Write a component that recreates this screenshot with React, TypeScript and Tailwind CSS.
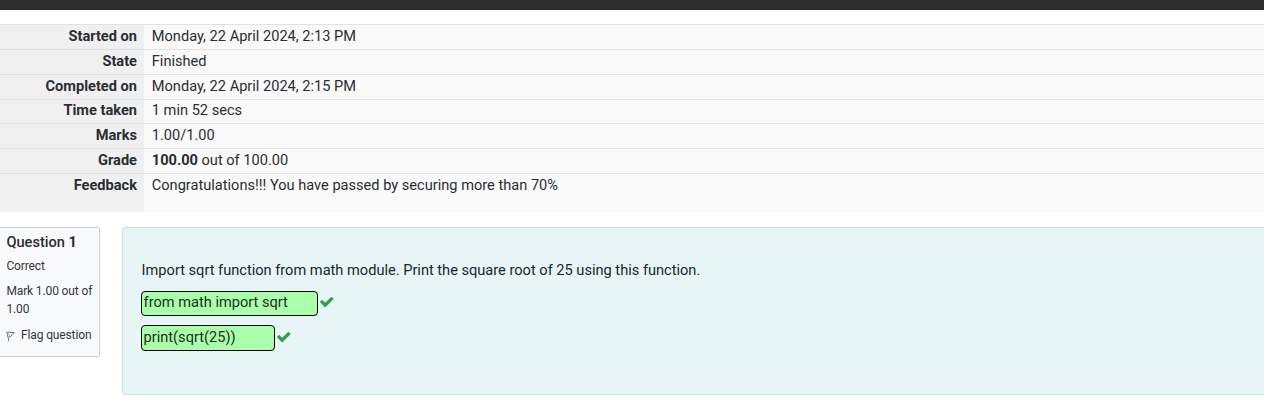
type Row = { label: string; strong?: string; value: string; height: string };

const rows: Row[] = [
  { label: "Started on", value: "Monday, 22 April 2024, 2:13 PM", height: "h-[25px] leading-[22px]" },
  { label: "State", value: "Finished", height: "h-[25px] leading-[22px]" },
  { label: "Completed on", value: "Monday, 22 April 2024, 2:15 PM", height: "h-[25px] leading-[22px]" },
  { label: "Time taken", value: "1 min 52 secs", height: "h-[24px] leading-[20px]" },
  { label: "Marks", value: "1.00/1.00", height: "h-[25px] leading-[22px]" },
  { label: "Grade", strong: "100.00", value: " out of 100.00", height: "h-[25px] leading-[22px]" },
  { label: "Feedback", value: "Congratulations!!! You have passed by securing more than 70%", height: "h-[39px] leading-[22px]" },
];

function FlagIcon() {
  return (
    <svg width="9" height="11" viewBox="0 0 9 11" fill="none" stroke="#777777" strokeWidth="1" className="relative top-px">
      <path d="M0.8 1.2 L3 10.4" />
      <path d="M0.8 1.2 L8.4 1.6 L5.8 3.6 L5.4 5 L2.2 6.2" />
      <path d="M2.6 2.6 L3.6 5.2" stroke="#b5b5b5" />
    </svg>
  );
}

function CheckIcon() {
  return (
    <svg viewBox="0 0 1792 1792" className="mb-[3px] ml-[0.5px] size-[15.5px] fill-[#319e4f]">
      <path d="M1671 566q0 40-28 68l-724 724-136 136q-28 28-68 28t-68-28l-136-136-362-362q-28-28-28-68t28-68l136-136q28-28 68-28t68 28l294 295 656-657q28-28 68-28t68 28l136 136q28 28 28 68z" />
    </svg>
  );
}

function Summary() {
  return (
    <div className="mt-[14px]">
      {rows.map((row) => (
        <div
          key={row.label}
          className={`flex border-t border-[#dee2e6] bg-[#fafafa] text-[14.6px] ${row.height}`}
        >
          <div className="w-36 shrink-0 bg-[#f0f0f0] pr-[7px] text-right font-bold">{row.label}</div>
          <div className="whitespace-pre pl-[7.8px]">
            {row.strong && <b>{row.strong}</b>}
            {row.value}
          </div>
        </div>
      ))}
    </div>
  );
}

function Answer({ text, box }: { text: string; box: string }) {
  return (
    <div className="flex items-center">
      <div className={`rounded-[4px] border border-black bg-[#aaffaa] pl-[1.6px] text-[#1d2d21] ${box}`}>{text}</div>
      <CheckIcon />
    </div>
  );
}

export default function App() {
  return (
    <div className="h-[403px] overflow-hidden bg-white font-['Roboto',sans-serif] font-normal text-[#292d32]">
      <div className="h-[10px] bg-[#2d2d2d]" />
      <Summary />
      <div className="mt-[15px] flex items-start">
        <aside className="h-[130px] w-[100px] shrink-0 rounded-r-[2px] border border-l-0 border-[#cad0d7] bg-[#f8f9fa] pl-[6.4px] text-[12px] leading-[18px] tracking-[-0.13px] text-[#33373c]">
          <h3 className="mt-[4px] text-[14.6px] leading-5 font-medium tracking-normal text-[#292d32]">
            Question <span className="font-bold">1</span>
          </h3>
          <div className="mt-[5px]">Correct</div>
          <div className="mt-[7px]">Mark 1.00 out of 1.00</div>
          <div className="mt-[8px] flex items-center gap-[5.6px] whitespace-nowrap">
            <FlagIcon />
            <span>Flag question</span>
          </div>
        </aside>
        <main className="ml-[22px] h-[168px] grow rounded-l-[4px] border border-r-0 border-[#c4e2e8] bg-[#e7f5f7] pl-[18px] text-[14.6px] text-[#13292e]">
          <p className="mt-[31px] ml-[0.6px] leading-[22px]">
            Import sqrt function from math module. Print the square root of 25 using this function.
          </p>
          <div className="mt-[10px] flex flex-col gap-[9px]">
            <Answer text="from math import sqrt" box="h-[25px] w-[177px] leading-[21px]" />
            <Answer text="print(sqrt(25))" box="h-[26px] w-[134px] leading-[23px]" />
          </div>
        </main>
      </div>
    </div>
  );
}
